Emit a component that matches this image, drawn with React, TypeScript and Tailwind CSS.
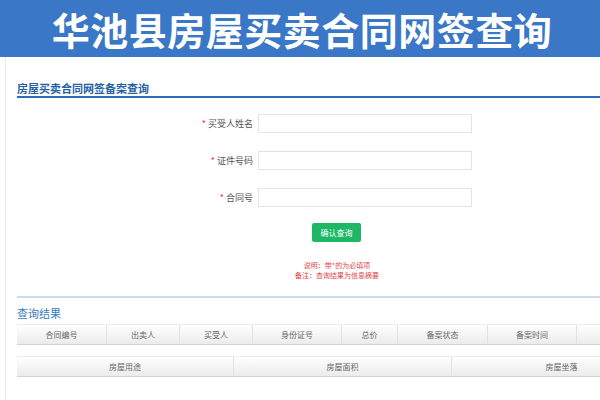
const CJK = "font-['Noto_Sans_CJK_SC','Noto_Sans',sans-serif]";

const FIELDS = ["买受人姓名", "证件号码", "合同号"];

const TABLE_A = [
  { label: "合同编号", w: "w-[90px]" },
  { label: "出卖人", w: "w-[73px]" },
  { label: "买受人", w: "w-[73px]" },
  { label: "身份证号", w: "w-[89px]" },
  { label: "总价", w: "w-[56px]" },
  { label: "备案状态", w: "w-[90px]" },
  { label: "备案时间", w: "w-[89px]" },
  { label: "", w: "w-[90px]" },
];

const TABLE_B = [
  { label: "房屋用途", w: "w-[217px]" },
  { label: "房屋面积", w: "w-[218px]" },
  { label: "房屋坐落", w: "w-[220px]" },
];

function HeadRow({ cols }: { cols: { label: string; w: string }[] }) {
  return (
    <div className="flex h-[21px] w-[760px] border-t border-b border-t-[#ececec] border-b-[#d2d2d2]">
      {cols.map((c, i) => (
        <div
          key={i}
          className={`${c.w} flex shrink-0 items-center justify-center border-r border-[#e2e2e2] bg-gradient-to-b from-white to-[#ebebeb] text-[8px] leading-none text-[#666]`}
        >
          {c.label}
        </div>
      ))}
    </div>
  );
}

export default function App() {
  return (
    <div className={`h-[400px] w-[600px] overflow-hidden bg-white ${CJK}`}>
      <div className="flex h-[57px] items-center justify-center bg-[#3a77c7] pl-[4px]">
        <h1 className="text-[38px] font-bold leading-none tracking-[0.5px] text-white">
          华池县房屋买卖合同网签查询
        </h1>
      </div>

      <div className="ml-[5px] h-[343px] border-l border-[#e9e9e9] pl-[11px]">
        <div className="flex h-[41px] items-end border-b-2 border-[#2b6cb5] pb-[2px]">
          <span className="text-[11px] font-bold leading-[12px] text-[#2660a4]">
            房屋买卖合同网签备案查询
          </span>
        </div>

        <div className="mt-[16px] flex flex-col gap-[18px]">
          {FIELDS.map((f) => (
            <div key={f} className="flex items-center">
              <label className="w-[236px] text-right text-[9px] leading-none text-[#555]">
                <span className="mr-[2px] text-[#e53935]">*</span>
                {f}
              </label>
              <div className="ml-[5px] h-[19px] w-[214px] border border-[#e3e3e3] bg-white" />
            </div>
          ))}
        </div>

        <button
          type="button"
          className="ml-[295px] mt-[16px] flex h-[19px] w-[49px] items-center justify-center rounded-[2px] bg-[#1cb866] text-[8px] leading-none text-white"
        >
          确认查询
        </button>

        <div className="ml-[260px] mt-[18px] w-[120px] text-center text-[7px] leading-[10px] text-[#e04848]">
          <p>说明：带*的为必填项</p>
          <p>备注：查询结果为信息摘要</p>
        </div>

        <div className="mt-[16px] h-[2px] bg-[#c9dcf0]" />

        <div className="mt-[8px] text-[11px] leading-[14px] text-[#3b7ac0]">查询结果</div>

        <div className="mt-[4px]">
          <HeadRow cols={TABLE_A} />
        </div>
        <div className="mt-[11px]">
          <HeadRow cols={TABLE_B} />
        </div>
      </div>
    </div>
  );
}
